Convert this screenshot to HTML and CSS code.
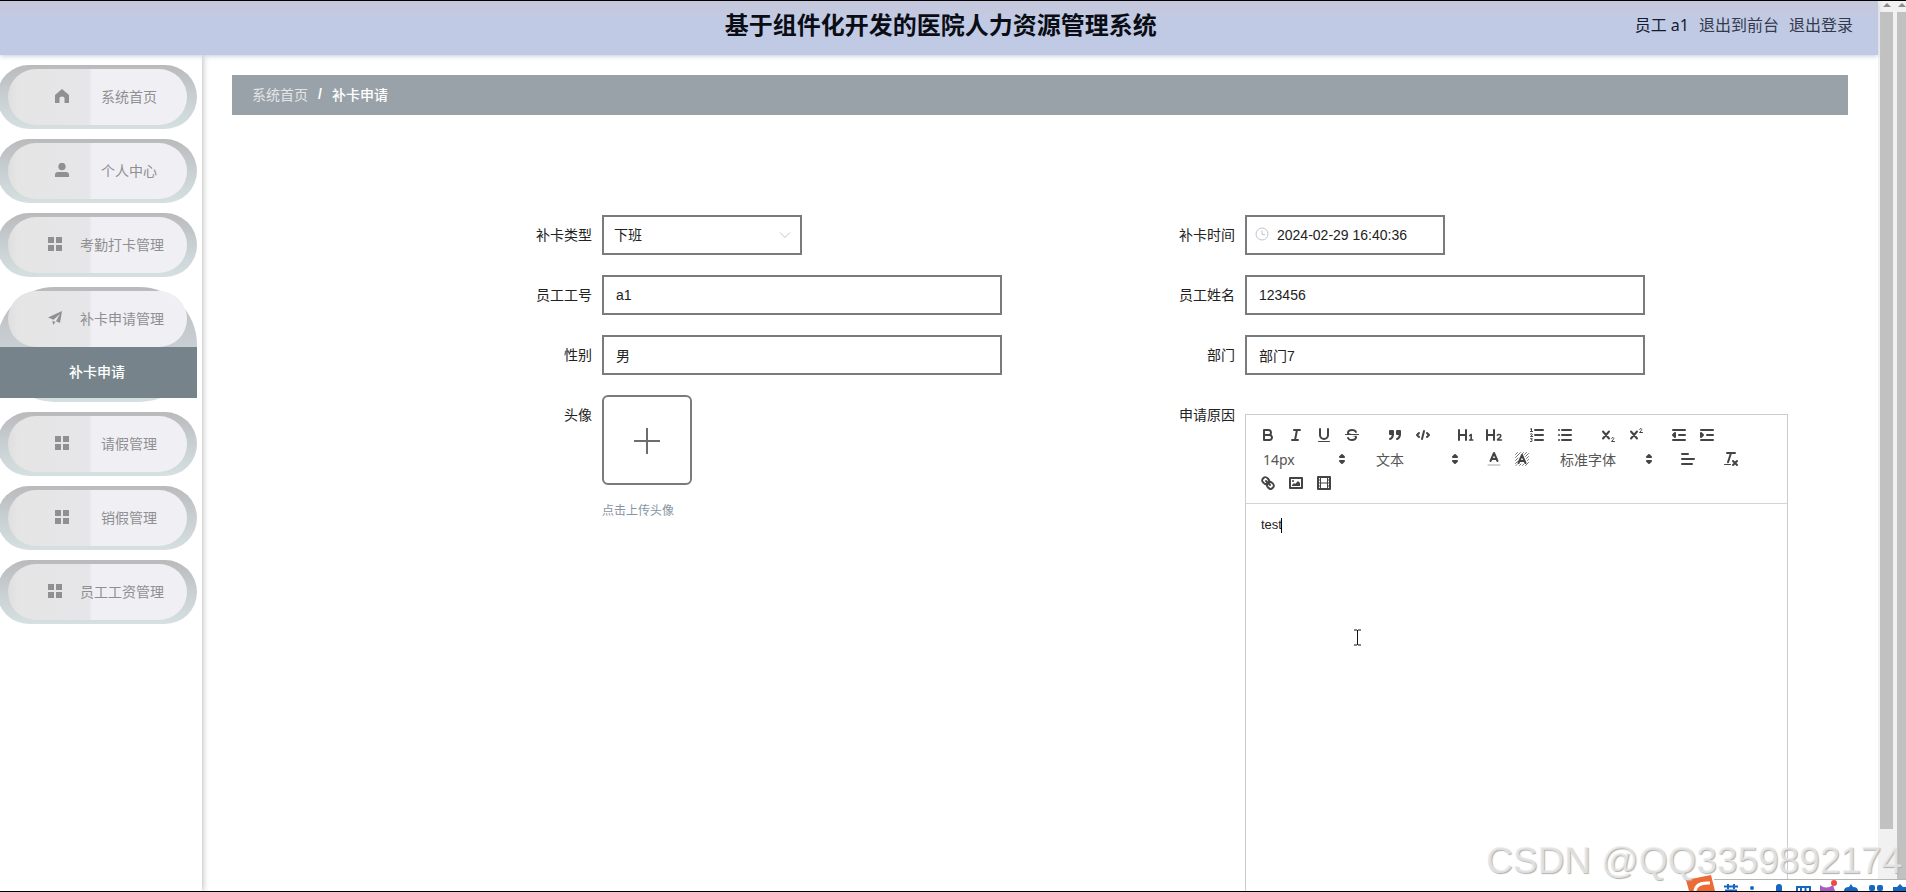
FILE: index.html
```html
<!DOCTYPE html>
<html lang="zh-CN">
<head>
<meta charset="utf-8">
<title>基于组件化开发的医院人力资源管理系统</title>
<link rel="stylesheet" href="styles.css">
</head>
<body>
<svg class="defs" width="0" height="0" aria-hidden="true">
  <symbol id="grid" viewBox="0 0 14 14"><path d="M0 0h6v6H0zM8 0h6v6H8zM0 8h6v6H0zM8 8h6v6H8z"/></symbol>
  <symbol id="home" viewBox="0 0 14 14"><path d="M7 0 L14 6 V14 H9.500 V9 Q9.500 7.500 7 7.500 Q4.500 7.500 4.500 9 V14 H0 V6 Z"/></symbol>
  <symbol id="user" viewBox="0 0 14 14"><circle cx="7" cy="3.500" r="3.700"/><path d="M0 14 V12 Q0 9 3 9 H11 Q14 9 14 12 V14 Z"/></symbol>
  <symbol id="plane" viewBox="0 0 14 14"><path d="M14 0 L12 12 L8 10.200 L12 3 L5.500 8.800 L0 6.600 Z M4.500 9.800 L7.500 11 L5 14 Z"/></symbol>
  <symbol id="updown" viewBox="0 0 18 18"><path class="both" d="M7 11 9 13 11 11ZM7 7 9 5 11 7Z"/></symbol>
</svg>
<div class="screen">
  <div class="app">
    <header class="topbar">
      <h1 class="title">基于组件化开发的医院人力资源管理系统</h1>
      <div class="account">
        <span class="who">员工 a1</span>
        <a href="#">退出到前台</a>
        <a href="#">退出登录</a>
      </div>
    </header>
    <div class="body">
      <nav class="sidebar">
        <ul class="menu">
          <li class="item"><a class="entry" href="#"><svg class="ico"><use href="#home"/></svg><span class="name">系统首页</span></a></li>
          <li class="item"><a class="entry" href="#"><svg class="ico"><use href="#user"/></svg><span class="name">个人中心</span></a></li>
          <li class="item"><a class="entry" href="#"><svg class="ico"><use href="#grid"/></svg><span class="name">考勤打卡管理</span></a></li>
          <li class="item"><a class="entry" href="#"><svg class="ico"><use href="#plane"/></svg><span class="name">补卡申请管理</span></a><a class="sub" href="#">补卡申请</a></li>
          <li class="item"><a class="entry" href="#"><svg class="ico"><use href="#grid"/></svg><span class="name">请假管理</span></a></li>
          <li class="item"><a class="entry" href="#"><svg class="ico"><use href="#grid"/></svg><span class="name">销假管理</span></a></li>
          <li class="item"><a class="entry" href="#"><svg class="ico"><use href="#grid"/></svg><span class="name">员工工资管理</span></a></li>
        </ul>
      </nav>
      <main class="main">
        <div class="crumbs"><a href="#">系统首页</a><span class="sep">/</span><span class="here">补卡申请</span></div>
        <form class="form">
          <div class="field"><label for="type">补卡类型</label>
            <div class="control short"><select id="type"><option>下班</option></select><svg class="chev" viewBox="0 0 14 14"><path d="M2 4.500 7 9.500 12 4.500"/></svg></div></div>
          <div class="field"><label for="time">补卡时间</label>
            <div class="control short"><svg class="clock" viewBox="0 0 14 14"><circle cx="7" cy="7" r="6"/><path d="M7 3.500V7.500H10"/></svg><input id="time" class="dated" type="text" value="2024-02-29 16:40:36"></div></div>
          <div class="field"><label for="no">员工工号</label><div class="control"><input id="no" type="text" value="a1"></div></div>
          <div class="field"><label for="nm">员工姓名</label><div class="control"><input id="nm" type="text" value="123456"></div></div>
          <div class="field"><label for="sex">性别</label><div class="control"><input id="sex" type="text" value="男"></div></div>
          <div class="field"><label for="dept">部门</label><div class="control"><input id="dept" type="text" value="部门7"></div></div>
          <div class="field"><label for="avatar">头像</label>
            <div class="upload"><button type="button" id="avatar" aria-label="点击上传头像"><svg viewBox="0 0 28 28"><path d="M14 1V27M1 14H27"/></svg></button><p class="tip">点击上传头像</p></div></div>
          <div class="field"><label for="reason">申请原因</label>
            <div class="editor">
              <div class="toolbar">
                <div class="group">
                  <button type="button" aria-label="粗体"><svg viewBox="0 0 18 18"><path d="M5,4H9.500A2.500,2.500,0,0,1,12,6.500v0A2.500,2.500,0,0,1,9.500,9H5A0,0,0,0,1,5,9V4A0,0,0,0,1,5,4Z"/><path d="M5,9h5.500A2.500,2.500,0,0,1,13,11.500v0A2.500,2.500,0,0,1,10.500,14H5a0,0,0,0,1,0,0V9A0,0,0,0,1,5,9Z"/></svg></button>
                  <button type="button" aria-label="斜体"><svg viewBox="0 0 18 18"><path d="M7 4H13M5 14H11M8 14 10 4"/></svg></button>
                  <button type="button" aria-label="下划线"><svg viewBox="0 0 18 18"><path d="M5,3V9a4.012,4.012,0,0,0,4,4H9a4.012,4.012,0,0,0,4-4V3"/><rect class="fill" height="1" rx="0.500" width="12" x="3" y="15"/></svg></button>
                  <button type="button" aria-label="删除线"><svg viewBox="0 0 18 18"><path class="thin" d="M15.500 8.500H2.500"/><path class="fill" d="M9.007,8C6.542,7.791,6,7.519,6,6.500,6,5.792,7.283,5,9,5c1.571,0,2.765.679,2.969,1.309a1,1,0,0,0,1.900-.617C13.356,4.106,11.354,3,9,3,6.200,3,4,4.538,4,6.500a3.200,3.200,0,0,0,.500,1.843Z"/><path class="fill" d="M8.984,10C11.457,10.208,12,10.479,12,11.500c0,.708-1.283,1.500-3,1.500-1.571,0-2.765-.679-2.969-1.309a1,1,0,1,0-1.900.617C4.644,13.894,6.646,15,9,15c2.800,0,5-1.538,5-3.500a3.200,3.200,0,0,0-.500-1.843Z"/></svg></button>
                </div>
                <div class="group">
                  <button type="button" aria-label="引用"><svg viewBox="0 0 18 18"><rect class="both" height="3" width="3" x="4" y="5"/><rect class="both" height="3" width="3" x="11" y="5"/><path class="both" d="M7,8c0,4.031-3,5-3,5"/><path class="both" d="M14,8c0,4.031-3,5-3,5"/></svg></button>
                  <button type="button" aria-label="代码"><svg viewBox="0 0 18 18"><path d="M5 7 3 9 5 11M13 7 15 9 13 11M10 5 8 13"/></svg></button>
                </div>
                <div class="group">
                  <button type="button" aria-label="标题一"><svg viewBox="0 0 18 18"><path class="fill" d="M10,4V14a1,1,0,0,1-2,0V10H3v4a1,1,0,0,1-2,0V4A1,1,0,0,1,3,4V8H8V4a1,1,0,0,1,2,0Zm6.068,9.209H14.981V8.244a.392.392,0,0,0-.430-.435h-.723a.586.586,0,0,0-.453.177l-1.370,1.240a.425.425,0,0,0-.010.634l.360.400a.400.400,0,0,0,.600.020l.400-.380v3.309H12.311a.392.392,0,0,0-.430.435v.700a.392.392,0,0,0,.430.435h3.757a.392.392,0,0,0,.430-.435v-.700A.392.392,0,0,0,16.068,13.209Z"/></svg></button>
                  <button type="button" aria-label="标题二"><svg viewBox="0 0 18 18"><path class="fill" d="M10,4V14a1,1,0,0,1-2,0V10H3v4a1,1,0,0,1-2,0V4A1,1,0,0,1,3,4V8H8V4a1,1,0,0,1,2,0Z"/><path class="semi" d="M12.300 9.200Q12.800 8.400 14.200 8.400 15.900 8.500 15.800 9.800 15.800 10.900 14.500 11.800 12.700 12.900 12.500 14H16.500"/></svg></button>
                </div>
                <div class="group">
                  <button type="button" aria-label="有序列表"><svg viewBox="0 0 18 18"><path d="M7 4H15M7 9H15M7 14H15"/><path class="thin" d="M2.500 5.500H4.500M3.500 5.500V2.500L2.500 3M2.500 8Q4.500 7.200 4.500 8.300 4.500 9 2.500 10.500H4.700M2.500 12.700H4.300L3.500 14Q4.800 14.500 4 15.300L2.500 15.500"/></svg></button>
                  <button type="button" aria-label="无序列表"><svg viewBox="0 0 18 18"><path d="M6 4H15M6 9H15M6 14H15M3 4H3.010M3 9H3.010M3 14H3.010"/></svg></button>
                </div>
                <div class="group">
                  <button type="button" aria-label="下标"><svg viewBox="0 0 18 18"><path d="M4 5.500 10 12.500M10 5.500 4 12.500"/><path class="thin" d="M12.500 12.300Q13 11.400 14.200 11.600 15.400 12.200 14.200 13.600L12.500 15.500H15.500"/></svg></button>
                  <button type="button" aria-label="上标"><svg viewBox="0 0 18 18"><path d="M4 5.500 10 12.500M10 5.500 4 12.500"/><path class="thin" d="M12.500 3.300Q13 2.400 14.200 2.600 15.400 3.200 14.200 4.600L12.500 6.500H15.500"/></svg></button>
                </div>
                <div class="group">
                  <button type="button" aria-label="减少缩进"><svg viewBox="0 0 18 18"><path d="M3 14H15M3 4H15M9 9H15"/><path class="both" d="M5 7V11L3 9Z"/></svg></button>
                  <button type="button" aria-label="增加缩进"><svg viewBox="0 0 18 18"><path d="M3 14H15M3 4H15M9 9H15"/><path class="both" d="M3 7V11L5 9Z"/></svg></button>
                </div>
                <div class="group"><div class="picker"><select aria-label="字号"><option>14px</option></select><svg><use href="#updown"/></svg></div></div>
                <div class="group"><div class="picker"><select aria-label="段落"><option>文本</option></select><svg><use href="#updown"/></svg></div></div>
                <div class="group">
                  <button type="button" aria-label="文字颜色"><svg viewBox="0 0 18 18"><path class="soft" d="M3 15H15"/><path d="M5.500 11 9 3 12.500 11M11.630 9H6.380"/></svg></button>
                  <button type="button" aria-label="背景颜色"><svg viewBox="0 0 18 18"><path class="hatch" d="M2.500 4.500 4.500 2.500M2.500 7.500 7.500 2.500M2.500 10.500 5 8M8.500 4.500 10.500 2.500M2.500 13.500 4.500 11.500M11.500 4.500 13.500 2.500M3 15.500 4 14.500M12.500 6.500 15.500 3.500M6.500 15.500 8 14M13.500 8.500 15.500 6.500M9.500 15.500 11 14M14.500 10.500 15.500 9.500M12.500 15.500 15.500 12.500"/><path d="M5.500 13 9 5 12.500 13M11.630 11H6.380"/></svg></button>
                </div>
                <div class="group"><div class="picker wide"><select aria-label="字体"><option>标准字体</option></select><svg><use href="#updown"/></svg></div></div>
                <div class="group"><button type="button" aria-label="对齐"><svg viewBox="0 0 18 18"><path d="M3 9H15M3 14H13M3 4H9"/></svg></button></div>
                <div class="group"><button type="button" aria-label="清除格式"><svg viewBox="0 0 18 18"><path d="M5 3H13M6 12.300 9 3M11 11 15 15M15 11 11 15"/><rect class="fill" height="1" rx="0.500" width="7" x="2" y="14"/></svg></button></div>
                <div class="group">
                  <button type="button" aria-label="链接"><svg viewBox="0 0 18 18"><path d="M7 7 11 11"/><path d="M8.900,4.577a3.476,3.476,0,0,1,.360,4.679A3.476,3.476,0,0,1,4.577,8.900C3.185,7.500,2.035,6.400,4.217,4.217S7.500,3.185,8.900,4.577Z"/><path d="M13.423,9.100a3.476,3.476,0,0,0-4.679-.360,3.476,3.476,0,0,0,.360,4.679c1.392,1.392,2.500,2.542,4.679.360S14.815,10.500,13.423,9.100Z"/></svg></button>
                  <button type="button" aria-label="图片"><svg viewBox="0 0 18 18"><rect height="10" width="12" x="3" y="4"/><circle class="fill" cx="6" cy="7" r="1"/><path class="fill" d="M5 12 5 11 7 9 8 10 11 7 13 9 13 12Z"/></svg></button>
                  <button type="button" aria-label="视频"><svg viewBox="0 0 18 18"><rect height="12" width="12" x="3" y="3"/><path class="mid" d="M5.500 3V15M12.500 3V15M5.500 9H12.500M3 6H5.500M3 9H5.500M3 12H5.500M12.500 6H15M12.500 9H15M12.500 12H15"/></svg></button>
                </div>
              </div>
              <div class="content" id="reason" role="textbox" aria-label="申请原因" contenteditable="true">test<span class="caret"></span></div>
            </div></div>
        </form>
      </main>
    </div>
  </div>
  <div class="scroll inner"><span class="arrow"></span><span class="thumb"></span></div>
  <div class="scroll outer"><span class="arrow"></span><span class="thumb"></span></div>

  <svg class="pointer" viewBox="0 0 9 17"><path d="M1 1H4M5 1H8M4.500 1V16M1 16H4M5 16H8"/></svg>
  <div class="ime">
    <svg viewBox="0 0 220 16" width="220" height="16">
      <path d="M28 4.500H220V16H28Z" fill="#fff"/><path d="M28 4.500H220" stroke="#b5b5b5" fill="none"/>
      <path d="M0 5 25 0 29 16H3Z" fill="#ee6a35"/><path d="M24 8Q10 7 9 16" stroke="#fff" stroke-width="3" fill="none"/>
      <g fill="none" stroke="#1467c2" stroke-width="2"><path d="M38 11.500H52M42 9V14M48 9V14M39 15.500H51"/><path d="M111 12H124M111 11V16M124 11V16M115 13V16M119.500 13V16"/></g>
      <g fill="#1467c2"><circle cx="66" cy="13" r="2"/><rect x="90" y="9" width="6" height="10" rx="3"/><path d="M158 16Q158 12 163 12L165 9 167 12Q172 12 172 16Z"/><rect x="183" y="10" width="6" height="6" rx="2"/><rect x="191" y="10" width="6" height="6" rx="2"/><path d="M207 12H211L214 9 217 12H220V16H207Z"/></g>
      <path d="M134 10Q140 15 147 10L149 16H134Z" fill="#a45fc0"/><circle cx="148" cy="8" r="3" fill="#ee4a45"/>
    </svg>
  </div>
  <div class="watermark">CSDN @QQ3359892174</div>
</div>
</body>
</html>
```
FILE: styles.css
```css
* { box-sizing: border-box; }
body { margin: 0; font: 14px "Liberation Sans", "Noto Sans CJK SC", sans-serif; color: #222; background: #fff; }
a { color: inherit; text-decoration: none; }
button, input, select { font: inherit; color: inherit; }
.defs { position: absolute; }

.screen { position: relative; display: flex; height: 100vh; overflow: hidden; border-top: 1px solid #000; border-bottom: 1px solid #000; }
.app { flex: 1; min-width: 0; display: flex; flex-direction: column; }

.topbar { position: relative; z-index: 2; display: flex; align-items: flex-start; flex: none; height: 54px; padding: 8px 25px 0 247px; background: linear-gradient(#c5c8dd, #c4c9df 12px, #c1cae4 18px); box-shadow: 0 1px 5px #c3c9dc; }
.title { flex: 1; margin: 0; font: bold 24px/30px "Noto Sans CJK SC", sans-serif; text-align: center; color: #0b0d14; }
.account { display: flex; gap: 10px; font: 16px/32px "Noto Sans", "Noto Sans CJK SC", sans-serif; color: #333a4c; }
.who { color: #161b30; }

.body { flex: 1; min-height: 0; display: flex; }
.sidebar { flex: none; width: 202px; padding-top: 10px; box-shadow: 1px 0 6px #bbb; }
.menu { display: flex; flex-direction: column; gap: 10px; margin: 0; padding: 0 5px 0 0; list-style: none; overflow: hidden; }
.item { margin-left: -3px; padding: 4px 0; border-radius: 100px; background: linear-gradient(#bababc, #c8cfd3 50%, #d6e0e0); }
.entry { display: flex; align-items: center; justify-content: center; gap: 18px; height: 56px; margin: 0 10px 0 11px; padding: 0 0 2px 17px; border-radius: 28px; background: linear-gradient(90deg, #dedee0, #e6e5e6 10px, #e6e5e7 81px, #f0f0f4 84px); color: #8f8f92; }
.name { min-width: 70px; text-align: right; }
.ico { width: 14px; height: 14px; fill: #909092; }
.sub { display: block; height: 51px; background: #76838a; color: #fff; font-weight: 500; line-height: 50px; text-align: center; }

.main { flex: 1; min-width: 0; overflow: hidden; padding: 20px 30px 0; }
.crumbs { display: flex; align-items: center; height: 40px; padding: 0 20px 2px; background: #99a2a9; color: #e3e6e8; }
.sep { width: 24px; text-align: center; color: #fff; font-weight: bold; }
.here { color: #fff; font-weight: 500; }

.form { display: grid; grid-template-columns: 1fr 1fr; row-gap: 20px; padding: 100px 60px 0 270px; }
.field { display: flex; align-items: flex-start; min-width: 0; }
.field > label { flex: none; width: 100px; padding-right: 10px; line-height: 40px; text-align: right; }
.control { position: relative; width: 400px; }
.control.short { width: 200px; }
.control input, .control select { display: block; width: 100%; height: 40px; padding: 0 12px; border: 2px solid #7b7b7d; border-radius: 0; background: #fff; appearance: none; outline: 0; }
.control select { padding: 0 10px; }
.control input.dated { padding-left: 30px; }
.chev, .clock { position: absolute; top: 13px; width: 14px; height: 14px; fill: none; stroke: #c0c4cc; }
.chev { right: 10px; }
.clock { left: 10px; top: 12px; }
.upload button { display: flex; align-items: center; justify-content: center; width: 90px; height: 90px; padding: 2px 0 0; border: 2px solid #7b7b7d; border-radius: 6px; background: #fff; }
.upload svg { width: 28px; height: 28px; fill: none; stroke: #6d6d70; stroke-width: 2; }
.tip { margin: 16px 0 0; font-size: 12px; line-height: 20px; color: #8795a3; }

.editor { flex: 1; min-width: 0; margin-top: 19px; border: 1px solid #ccc; }
.toolbar { display: flex; flex-wrap: wrap; column-gap: 15px; padding: 8px; border-bottom: 1px solid #d5d5d5; }
.group { display: flex; }
.group button { width: 28px; height: 24px; padding: 3px 5px; border: 0; background: none; }
.toolbar svg { display: block; width: 18px; height: 18px; fill: none; stroke: #444; stroke-width: 2; stroke-linecap: round; stroke-linejoin: round; }
.toolbar .fill { fill: #444; stroke: none; }
.both { fill: #444; }
.toolbar .thin { stroke-width: 1; }
.toolbar .hatch { stroke-width: 1; stroke: #777; }
.toolbar .mid { stroke-width: 1; }
.toolbar .semi { stroke-width: 1.5; }
.toolbar .soft { stroke: #aaa; stroke-width: 1; }
.picker { position: relative; width: 98px; }
.picker.wide { width: 108px; }
.picker select { display: block; width: 100%; height: 24px; padding: 0 9px; border: 0; background: none; appearance: none; color: #555; font-family: "Noto Sans", "Noto Sans CJK SC", sans-serif; }
.picker svg { position: absolute; top: 3px; right: 1px; pointer-events: none; }
.content { min-height: 500px; padding: 12px 15px; font-size: 13px; line-height: 18px; outline: 0; }
.caret { display: inline-block; height: 15px; margin-left: -1px; border-left: 1px solid #000; vertical-align: middle; }

.scroll { flex: none; display: flex; flex-direction: column; background: #f1f1f1; }
.scroll.inner { width: 19px; padding: 0 4px 62px 2px; }
.scroll.outer { width: 9px; }
.arrow { align-self: center; height: 5px; margin: 1px 0 5px; border: 4px solid transparent; border-top: 0; border-bottom: 4px solid #8b8b8b; }
.thumb { flex: 1; background: #c1c1c1; }

.pointer { position: absolute; left: 1353px; top: 628px; width: 9px; height: 17px; fill: none; stroke: #111; }
.ime { position: absolute; right: 0; bottom: 0; height: 16px; }
.watermark { position: absolute; right: 4px; bottom: 8px; font-size: 37px; line-height: 44px; color: rgba(236, 236, 236, .8); text-shadow: 1px 1px 1px #b0b0b0; white-space: nowrap; }
```
